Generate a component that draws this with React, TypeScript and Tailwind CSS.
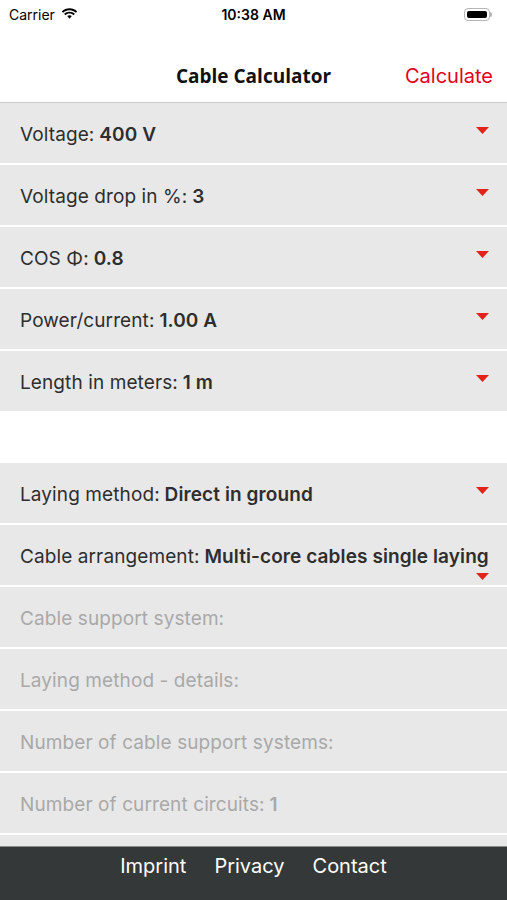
import { ReactNode } from "react";

type Field = {
  label: string;
  value?: string;
  enabled: boolean;
  arrowBelow?: boolean;
};

const groupOne: Field[] = [
  { label: "Voltage:", value: "400 V", enabled: true },
  { label: "Voltage drop in %:", value: "3", enabled: true },
  { label: "COS Φ:", value: "0.8", enabled: true },
  { label: "Power/current:", value: "1.00 A", enabled: true },
  { label: "Length in meters:", value: "1 m", enabled: true },
];

const groupTwo: Field[] = [
  { label: "Laying method:", value: "Direct in ground", enabled: true },
  {
    label: "Cable arrangement:",
    value: "Multi-core cables single laying",
    enabled: true,
    arrowBelow: true,
  },
  { label: "Cable support system:", enabled: false },
  { label: "Laying method - details:", enabled: false },
  { label: "Number of cable support systems:", enabled: false },
  { label: "Number of current circuits:", value: "1", enabled: false },
  { label: "", enabled: false },
];

function Caret() {
  return (
    <svg width="13" height="7" viewBox="0 0 13 7" className="shrink-0">
      <path d="M0 0h13L6.5 7z" fill="#e2231a" />
    </svg>
  );
}

function Row({ field }: { field: Field }) {
  const text: ReactNode = (
    <span className="whitespace-nowrap pt-[4px]">
      {field.label}
      {field.value && <span className="font-semibold"> {field.value}</span>}
    </span>
  );

  if (field.arrowBelow) {
    return (
      <div className="relative h-[60px] shrink-0 bg-[#e8e8e8] pl-5 pr-4 flex items-center text-[19px] tracking-[0.1px] text-[#2e2e2e]">
        {text}
        <div className="absolute right-[18px] bottom-[5px]">
          <Caret />
        </div>
      </div>
    );
  }

  return (
    <div
      className={`h-[60px] shrink-0 bg-[#e8e8e8] pl-5 pr-[18px] flex items-center justify-between text-[19px] tracking-[0.1px] ${
        field.enabled ? "text-[#2e2e2e]" : "text-[#a9a9a9]"
      }`}
    >
      {text}
      {field.enabled && (
        <div className="-mt-[6px]">
          <Caret />
        </div>
      )}
    </div>
  );
}

function StatusBar() {
  return (
    <div className="h-7 shrink-0 flex items-center justify-between px-[9px] text-[14px] text-black">
      <div className="flex items-center gap-1.5">
        <span>Carrier</span>
        <svg width="17" height="12" viewBox="0 0 17 12">
          <path
            d="M8.5 2.2c2.5 0 4.7 1 6.4 2.6l1.3-1.4C14.2 1.4 11.5.3 8.5.3S2.8 1.4.8 3.4l1.3 1.4C3.8 3.2 6 2.2 8.5 2.2z"
            fill="#000"
          />
          <path
            d="M8.5 5.6c1.6 0 3 .6 4.1 1.6l1.3-1.4C12.5 4.5 10.6 3.7 8.5 3.7S4.5 4.5 3.1 5.8l1.3 1.4c1.1-1 2.5-1.6 4.1-1.6z"
            fill="#000"
          />
          <path d="M8.5 7.2c-.9 0-1.7.3-2.3.9l2.3 2.6 2.3-2.6c-.6-.6-1.4-.9-2.3-.9z" fill="#000" />
        </svg>
      </div>
      <span className="font-semibold absolute left-1/2 -translate-x-1/2">10:38 AM</span>
      <div className="flex items-center mr-[6px]">
        <div className="w-[26px] h-[13px] rounded-[4px] border border-[#b5b5b5] p-[2px]">
          <div className="w-full h-full rounded-[2px] bg-black" />
        </div>
        <div className="w-[2px] h-[5px] rounded-r bg-[#b5b5b5]" />
      </div>
    </div>
  );
}

export default function App() {
  return (
    <div
      className="relative w-[507px] h-[900px] bg-white overflow-hidden flex flex-col"
      style={{ fontFamily: "Inter, 'Liberation Sans', sans-serif" }}
    >
      <StatusBar />

      <div className="h-[75px] shrink-0 relative flex items-end pb-[11px] border-b border-[#c9c9c9]">
        <span
          className="absolute left-1/2 -translate-x-1/2 bottom-[12px] text-[19px] font-bold text-[#111]"
          style={{ fontFamily: "'Open Sans', sans-serif" }}
        >
          Cable Calculator
        </span>
        <span className="ml-auto mr-[14px] text-[20px] text-[#e3001b]">Calculate</span>
      </div>

      <div className="flex-1 flex flex-col overflow-hidden">
        <div className="flex flex-col gap-[2px]">
          {groupOne.map((f) => (
            <Row key={f.label} field={f} />
          ))}
        </div>
        <div className="h-[52px] shrink-0" />
        <div className="flex flex-col gap-[2px]">
          {groupTwo.map((f, i) => (
            <Row key={i} field={f} />
          ))}
        </div>
      </div>

      <div className="absolute left-0 right-0 bottom-0 h-[54px] bg-[#353839] border-t border-[#8a8a8a] flex justify-center gap-[28px] pt-[4px] text-[20px] text-white">
        <span>Imprint</span>
        <span>Privacy</span>
        <span>Contact</span>
      </div>
    </div>
  );
}
